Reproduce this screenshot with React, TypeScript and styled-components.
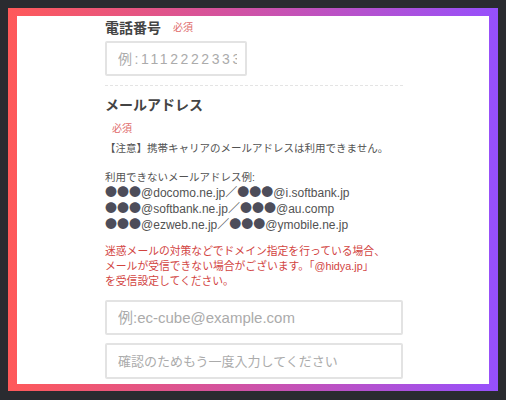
import styled, { createGlobalStyle } from 'styled-components';

const GlobalStyle = createGlobalStyle`
  html, body {
    margin: 0;
    padding: 0;
    background: #2a2b30;
  }
  * {
    box-sizing: border-box;
  }
`;

const Frame = styled.div`
  margin: 8px 8px 0;
  height: 383px;
  padding: 8px 9px 7px 9px;
  background: linear-gradient(90deg, #ff5959 0%, #d352a0 45%, #9650fd 100%);
`;

const Card = styled.div`
  height: 100%;
  background: #fff;
  overflow: hidden;
  padding: 1px 0 0 88px;
  font-family: 'Liberation Sans', 'Noto Sans CJK JP', sans-serif;
  color: #454545;
`;

const Column = styled.div`
  width: 298px;
  display: flex;
  flex-direction: column;
`;

const TitleRow = styled.div`
  display: flex;
  align-items: center;
  gap: 12px;
`;

const Title = styled.h3`
  margin: 0;
  font-family: 'Noto Sans CJK JP', sans-serif;
  font-size: 14px;
  line-height: 20px;
  font-weight: 700;
  color: #444;
`;

const Required = styled.span<{ $indent?: number; $top?: number }>`
  display: block;
  font-family: 'Noto Sans CJK JP', sans-serif;
  font-size: 10px;
  line-height: 14px;
  color: #e06a6a;
  margin: ${(p) => p.$top ?? 0}px 0 0 ${(p) => p.$indent ?? 0}px;
`;

const Field = styled.input<{ $width?: number; $top: number; $height?: number; $size?: number }>`
  display: block;
  width: ${(p) => (p.$width ? `${p.$width}px` : '100%')};
  height: ${(p) => p.$height ?? 35}px;
  margin-top: ${(p) => p.$top}px;
  padding: 0 8px 0 11px;
  border: 2px solid #e3e3e3;
  border-radius: 2px;
  background: #fff;
  font-family: 'Liberation Sans', 'Noto Sans CJK JP', sans-serif;
  font-size: ${(p) => p.$size ?? 14}px;
  outline: none;
  &::placeholder {
    color: #ababab;
  }
`;

const PhoneField = styled(Field)`
  letter-spacing: 2.6px;
`;

const Divider = styled.hr`
  width: 100%;
  margin: 9px 0 8px;
  border: none;
  border-top: 1px dashed #e4e4e4;
`;

const Text = styled.p<{ $top?: number; $size?: number }>`
  margin: ${(p) => p.$top ?? 0}px 0 0;
  height: 16px;
  font-size: ${(p) => p.$size ?? 10.5}px;
  line-height: 16px;
  color: #525252;
  white-space: nowrap;
`;

const Dots = styled.span`
  font-family: 'Noto Sans CJK JP', sans-serif;
  line-height: 1;
  color: #4d4d5a;
`;

const Warning = styled.p`
  margin: 11px 0 0;
  font-family: 'Liberation Sans', 'Noto Sans CJK JP', sans-serif;
  font-size: 10.8px;
  line-height: 15px;
  color: #d2443f;
  white-space: nowrap;
`;

const examples = [
  ['docomo.ne.jp', 'i.softbank.jp'],
  ['softbank.ne.jp', 'au.comp'],
  ['ezweb.ne.jp', 'ymobile.ne.jp'],
];

export default function App() {
  return (
    <>
      <GlobalStyle />
      <Frame>
        <Card>
          <Column>
            <TitleRow>
              <Title>電話番号</Title>
              <Required>必須</Required>
            </TitleRow>
            <PhoneField $width={142} $top={4} $size={14} placeholder='例:1112222333' readOnly />
            <Divider />
            <Title>メールアドレス</Title>
            <Required $indent={7} $top={7}>必須</Required>
            <Text $top={5}>【注意】携帯キャリアのメールアドレスは利用できません。</Text>
            <Text $top={13}>利用できないメールアドレス例:</Text>
            {examples.map(([a, b]) => (
              <Text key={a} $size={12}>
                <Dots>●●●</Dots>@{a}／<Dots>●●●</Dots>@{b}
              </Text>
            ))}
            <Warning>
              迷惑メールの対策などでドメイン指定を行っている場合、
              <br />
              メールが受信できない場合がございます。「@hidya.jp」
              <br />
              を受信設定してください。
            </Warning>
            <Field $top={11} $size={15} placeholder='例:ec-cube@example.com' readOnly />
            <Field $top={8} $height={36} $size={13} placeholder='確認のためもう一度入力してください' readOnly />
          </Column>
        </Card>
      </Frame>
    </>
  );
}
